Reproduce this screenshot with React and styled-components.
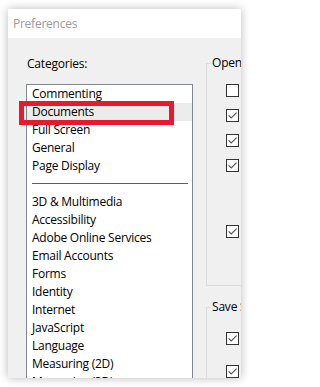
import React from 'react';
import styled, { createGlobalStyle } from 'styled-components';

const GlobalStyle = createGlobalStyle`
  html, body {
    margin: 0;
    padding: 0;
    background: #ffffff;
  }
  body {
    font-family: "Open Sans", "Noto Sans", "Liberation Sans", sans-serif;
    font-size: 12px;
    color: #000;
  }
`;

const Page = styled.div`
  width: 249px;
  height: 387px;
  padding: 9px 8px 0 8px;
  box-sizing: border-box;
  overflow: hidden;
`;

const Window = styled.div`
  width: 233px;
  height: 369px;
  display: flex;
  flex-direction: column;
  background: #f0f0f0;
  box-shadow: 0 0 9px rgba(0, 0, 0, 0.28);
  overflow: hidden;
`;

const TitleBar = styled.div`
  height: 29px;
  flex: none;
  display: flex;
  align-items: center;
  padding-left: 5px;
  background: #ffffff;
  color: #9a9a9a;
  font-size: 12px;
  letter-spacing: -0.25px;
`;

const Body = styled.div`
  flex: 1;
  display: flex;
  overflow: hidden;
`;

const LeftPane = styled.div`
  flex: none;
  width: 167px;
  margin-left: 18px;
  padding-top: 17px;
  display: flex;
  flex-direction: column;
`;

const Caption = styled.div`
  line-height: 18px;
  padding-left: 1px;
  letter-spacing: -0.2px;
`;

const ListBox = styled.ul`
  position: relative;
  list-style: none;
  margin: 11px 0 0 0;
  padding: 0;
  flex: 1;
  background: #ffffff;
  border: 1px solid #828790;
  border-bottom: none;
`;

const Item = styled.li`
  height: 18px;
  line-height: 18px;
  padding-left: 5px;
  letter-spacing: -0.25px;
  white-space: nowrap;
  background: ${p => (p.$selected ? '#ececec' : 'transparent')};
`;

const Separator = styled.li`
  height: 18px;
  display: flex;
  align-items: center;
  padding: 0 4px 0 5px;

  &::after {
    content: '';
    flex: 1;
    height: 1px;
    background: #0078d7;
    margin-top: -1px;
  }
`;

const Callout = styled.div`
  position: absolute;
  left: -8px;
  top: 16px;
  width: 155px;
  height: 24px;
  box-sizing: border-box;
  border: 5px solid #e8192c;
  pointer-events: none;
`;

const RightPane = styled.div`
  flex: none;
  width: 60px;
  margin-left: 13px;
  padding-top: 17px;
  display: flex;
  flex-direction: column;
`;

const Group = styled.fieldset`
  flex: none;
  margin: ${p => p.$gap || 0}px 0 0 0;
  padding: 0;
  height: ${p => p.$height}px;
  box-sizing: border-box;
  border: 1px solid #dcdcdc;
  border-right: none;
  min-width: 0;
`;

const Legend = styled.legend`
  margin-left: 4px;
  padding: 0 2px 0 1px;
  line-height: 16px;
  letter-spacing: -0.2px;
  white-space: nowrap;
`;

const Row = styled.div`
  display: flex;
  padding-left: 19px;
  margin-top: ${p => p.$gap}px;
`;

const Box = styled.span`
  width: 13px;
  height: 13px;
  box-sizing: border-box;
  border: 1px solid #333333;
  background: #ffffff;
  display: flex;
`;

function CheckBox({ checked }) {
  return (
    <Box>
      {checked && (
        <svg width="11" height="11" viewBox="0 0 11 11">
          <path d="M1.6 5.4 L4.2 8 L9.6 2.6" fill="none" stroke="#555" strokeWidth="1.15" />
        </svg>
      )}
    </Box>
  );
}

const topCategories = ['Commenting', 'Documents', 'Full Screen', 'General', 'Page Display'];
const moreCategories = [
  '3D & Multimedia',
  'Accessibility',
  'Adobe Online Services',
  'Email Accounts',
  'Forms',
  'Identity',
  'Internet',
  'JavaScript',
  'Language',
  'Measuring (2D)',
  'Measuring (3D)',
];

const openRows = [
  { gap: 13, checked: false },
  { gap: 12, checked: true },
  { gap: 12, checked: true },
  { gap: 12, checked: true },
  { gap: 53, checked: true },
];

const saveRows = [
  { gap: 17, checked: true },
  { gap: 20, checked: true },
];

export default function App() {
  return (
    <>
      <GlobalStyle />
      <Page>
        <Window>
          <TitleBar>Preferences</TitleBar>
          <Body>
            <LeftPane>
              <Caption>Categories:</Caption>
              <ListBox>
                {topCategories.map(name => (
                  <Item key={name} $selected={name === 'Documents'}>
                    {name}
                  </Item>
                ))}
                <Separator />
                {moreCategories.map(name => (
                  <Item key={name}>{name}</Item>
                ))}
                <Callout />
              </ListBox>
            </LeftPane>
            <RightPane>
              <Group $height={231}>
                <Legend>Open Documents</Legend>
                {openRows.map((r, i) => (
                  <Row key={i} $gap={r.gap}>
                    <CheckBox checked={r.checked} />
                  </Row>
                ))}
              </Group>
              <Group $gap={13} $height={100}>
                <Legend>Save Settings</Legend>
                {saveRows.map((r, i) => (
                  <Row key={i} $gap={r.gap}>
                    <CheckBox checked={r.checked} />
                  </Row>
                ))}
              </Group>
            </RightPane>
          </Body>
        </Window>
      </Page>
    </>
  );
}
